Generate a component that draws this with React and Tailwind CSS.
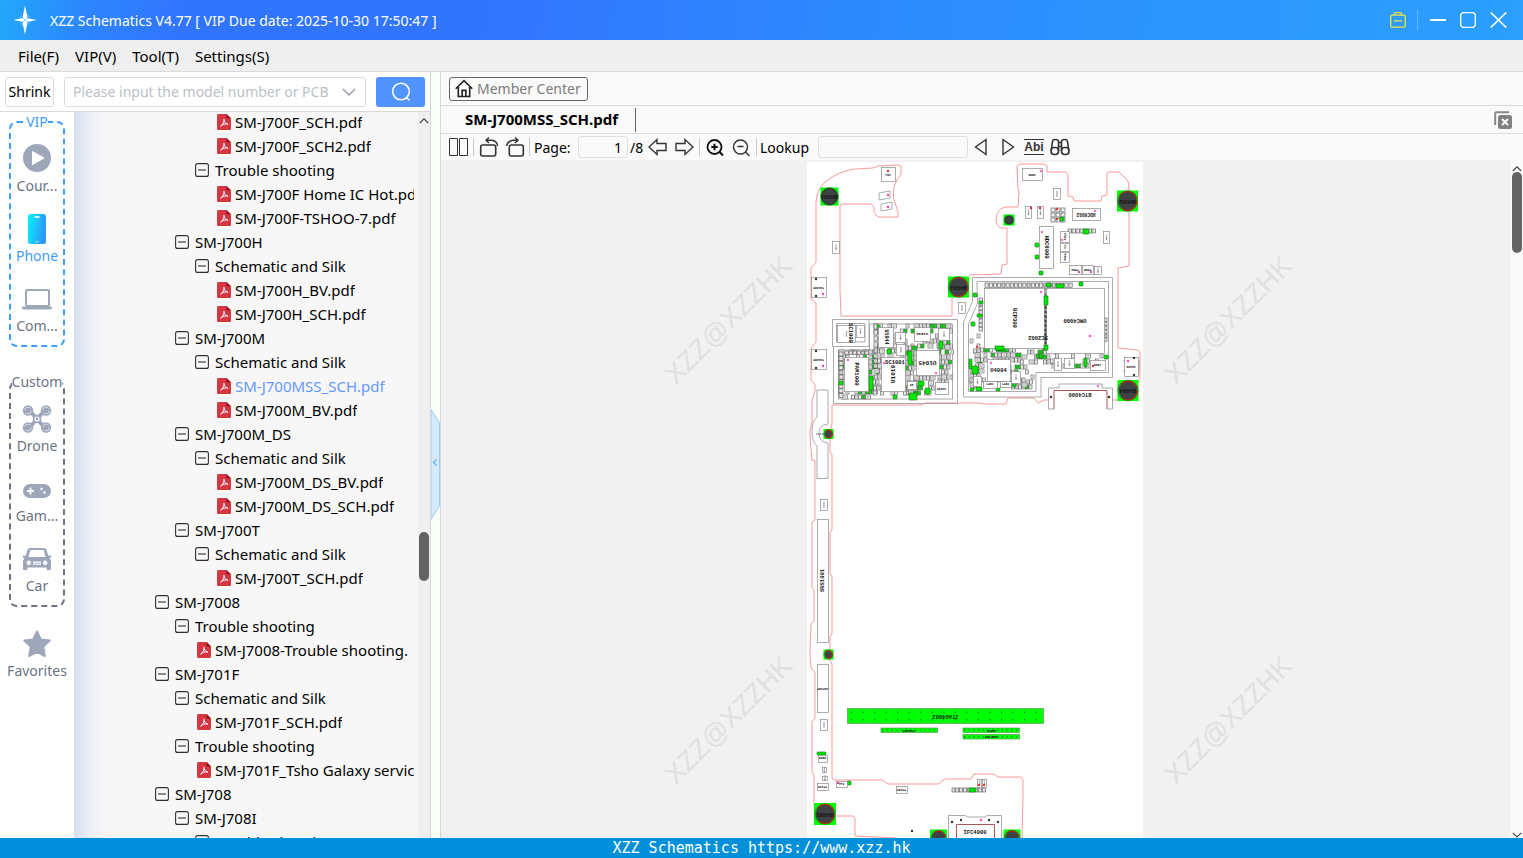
import React from "react";

const tree = [
  { level: 2, kind: "pdf", name: "SM-J700F_SCH.pdf" },
  { level: 2, kind: "pdf", name: "SM-J700F_SCH2.pdf" },
  { level: 2, kind: "dir", name: "Trouble shooting" },
  { level: 2, kind: "pdf", name: "SM-J700F Home IC Hot.pdf" },
  { level: 2, kind: "pdf", name: "SM-J700F-TSHOO-7.pdf" },
  { level: 1, kind: "dir", name: "SM-J700H" },
  { level: 2, kind: "dir", name: "Schematic and Silk" },
  { level: 2, kind: "pdf", name: "SM-J700H_BV.pdf" },
  { level: 2, kind: "pdf", name: "SM-J700H_SCH.pdf" },
  { level: 1, kind: "dir", name: "SM-J700M" },
  { level: 2, kind: "dir", name: "Schematic and Silk" },
  { level: 2, kind: "pdf", name: "SM-J700MSS_SCH.pdf", active: true },
  { level: 2, kind: "pdf", name: "SM-J700M_BV.pdf" },
  { level: 1, kind: "dir", name: "SM-J700M_DS" },
  { level: 2, kind: "dir", name: "Schematic and Silk" },
  { level: 2, kind: "pdf", name: "SM-J700M_DS_BV.pdf" },
  { level: 2, kind: "pdf", name: "SM-J700M_DS_SCH.pdf" },
  { level: 1, kind: "dir", name: "SM-J700T" },
  { level: 2, kind: "dir", name: "Schematic and Silk" },
  { level: 2, kind: "pdf", name: "SM-J700T_SCH.pdf" },
  { level: 0, kind: "dir", name: "SM-J7008" },
  { level: 1, kind: "dir", name: "Trouble shooting" },
  { level: 1, kind: "pdf", name: "SM-J7008-Trouble shooting." },
  { level: 0, kind: "dir", name: "SM-J701F" },
  { level: 1, kind: "dir", name: "Schematic and Silk" },
  { level: 1, kind: "pdf", name: "SM-J701F_SCH.pdf" },
  { level: 1, kind: "dir", name: "Trouble shooting" },
  { level: 1, kind: "pdf", name: "SM-J701F_Tsho Galaxy servic" },
  { level: 0, kind: "dir", name: "SM-J708" },
  { level: 1, kind: "dir", name: "SM-J708I" },
  { level: 2, kind: "dir", name: "Trouble shooting" },
];

const dirPad = ["pl-[81px]", "pl-[101px]", "pl-[121px]"];
const pdfPad = ["pl-[103px]", "pl-[123px]", "pl-[143px]"];

function MinusBox() {
  return (
    <svg width="14" height="14" viewBox="0 0 14 14" fill="none" stroke="#333" strokeWidth="1.1" className="shrink-0">
      <rect x="0.6" y="0.6" width="12.8" height="12.8" rx="2" />
      <path d="M3 7h8" />
    </svg>
  );
}

function PdfIcon() {
  return (
    <svg width="14" height="16" viewBox="0 0 14 16" className="shrink-0">
      <path d="M1.5 0H9.5L14 4.5V14.5A1.5 1.5 0 0 1 12.5 16H1.5A1.5 1.5 0 0 1 0 14.5V1.5A1.5 1.5 0 0 1 1.5 0Z" fill="#d5363f" />
      <path d="M9.5 0L14 4.5H10.5A1 1 0 0 1 9.5 3.5Z" fill="#8f1019" />
      <path d="M7 5.3C6.3 5.6 7.6 8 8.6 9.2C9.6 10.3 11 10.6 10.8 10C10.4 9.3 6.5 10 4.3 11.4C2.9 12.4 3.9 12.6 4.9 11.3C6.2 9.5 7.7 6.2 7 5.3Z" fill="none" stroke="#fff" strokeWidth="1" />
    </svg>
  );
}

function CourseIcon() {
  return (
    <svg width="32" height="32" viewBox="0 0 32 32">
      <circle cx="16" cy="16" r="14" fill="#9ea7ba" />
      <path d="M11.5 9.5L23 16L11.5 22.5Z" fill="#fff" stroke="#fff" strokeWidth="1" strokeLinejoin="round" />
    </svg>
  );
}

function PhoneIcon() {
  return (
    <svg width="32" height="32" viewBox="0 0 32 32">
      <defs>
        <linearGradient id="phoneFill" x1="0" x2="1" y1="0" y2="0.3">
          <stop offset="0" stopColor="#04f4fd" />
          <stop offset="1" stopColor="#2e97fb" />
        </linearGradient>
      </defs>
      <rect x="7" y="2" width="18" height="30" rx="2.5" fill="url(#phoneFill)" />
      <path d="M13.5 5h5" stroke="#fff" strokeWidth="1.6" />
      <path d="M14 29.8h4" stroke="#aef" strokeWidth="0.8" />
    </svg>
  );
}

function LaptopIcon() {
  return (
    <svg width="32" height="32" viewBox="0 0 32 32">
      <rect x="5" y="8" width="23" height="16" rx="1" fill="none" stroke="#9ea7ba" strokeWidth="2" />
      <path d="M1 24.5H31V25.5A2 2 0 0 1 29 27.5H3A2 2 0 0 1 1 25.5Z" fill="#9ea7ba" />
    </svg>
  );
}

function DroneIcon() {
  return (
    <svg width="32" height="32" viewBox="0 0 32 32">
      <path d="M8 8L24 26M24 8L8 26" stroke="#9ea7ba" strokeWidth="4" />
      {[[7, 8.5], [25, 8.5], [7, 25.5], [25, 25.5]].map(([x, y]) => (
        <g key={`${x}-${y}`}>
          <circle cx={x} cy={y} r="5.2" fill="#9ea7ba" />
          <circle cx={x} cy={y} r="3.4" fill="none" stroke="#dfe2ea" strokeWidth="0.9" strokeDasharray="8 3" />
        </g>
      ))}
      <circle cx="16" cy="17" r="4.2" fill="#9ea7ba" />
      <circle cx="16" cy="17" r="2" fill="none" stroke="#fff" strokeWidth="1.2" />
    </svg>
  );
}

function GameIcon() {
  return (
    <svg width="32" height="32" viewBox="0 0 32 32">
      <rect x="2" y="12" width="28" height="14" rx="7" fill="#9ea7ba" />
      <path d="M6 19h7M9.500 15.500v7" stroke="#fff" strokeWidth="1.8" />
      <circle cx="20.500" cy="17" r="1.200" fill="#fff" />
      <circle cx="23.500" cy="20.500" r="1.200" fill="#fff" />
    </svg>
  );
}

function CarIcon() {
  return (
    <svg width="32" height="32" viewBox="0 0 32 32">
      <path fillRule="evenodd" fill="#9ea7ba" d="M9 6H23Q25 6 25.600 8L27.200 13.500L30 13.500V15.500L28.500 16.200Q30 17.500 30 19.500V27Q30 28 29 28H26.500Q25.500 28 25.500 27V25.500H6.500V27Q6.500 28 5.500 28H3Q2 28 2 27V19.500Q2 17.500 3.500 16.200L2 15.500V13.500L4.800 13.500L6.400 8Q7 6 9 6ZM9.300 8L7.500 15H24.500L22.700 8ZM7.800 18.600A2.200 2.200 0 1 0 7.800 23A2.200 2.200 0 1 0 7.800 18.600ZM24.200 18.600A2.200 2.200 0 1 0 24.200 23A2.200 2.200 0 1 0 24.200 18.600ZM12 19.500V22.800H20V19.500Z" />
      <path d="M12.500 21.200h7" stroke="#9ea7ba" strokeWidth="0.800" />
    </svg>
  );
}

function StarIcon() {
  return (
    <svg width="32" height="32" viewBox="0 0 32 32">
      <path d="M16 4.500L19.800 12.400L28.700 13.600L22.200 19.700L23.800 29L16 24.800L8.200 29L9.800 19.700L3.300 13.600L12.200 12.400Z" fill="#9ea7ba" stroke="#9ea7ba" strokeWidth="2" strokeLinejoin="round" />
    </svg>
  );
}

function SideItem({ icon, label, active }) {
  return (
    <button type="button" className={`flex w-full flex-col items-center ${active ? "text-[#409eff]" : "text-[#6b7384]"}`}>
      {icon}
      <span className="h-6 text-[14px] leading-6 whitespace-nowrap">{label}</span>
    </button>
  );
}

function SideBar() {
  return (
    <nav aria-label="Categories" className="flex w-[74px] shrink-0 flex-col items-stretch bg-white">
      <fieldset className="mx-[9px] min-w-0 rounded-lg border-2 border-dashed border-[#409eff] pb-[7px]">
        <legend className="mx-auto h-5 text-[14px] leading-5 text-[#409eff]">VIP</legend>
        <div className="flex flex-col gap-[14px] pt-[10px]">
          <SideItem icon={<CourseIcon />} label="Cour..." />
          <SideItem icon={<PhoneIcon />} label="Phone" active />
          <SideItem icon={<LaptopIcon />} label="Com..." />
        </div>
      </fieldset>
      <fieldset className="mx-[9px] mt-[25px] min-w-0 rounded-lg border-2 border-dashed border-[#6b7384] pb-[7px]">
        <legend className="mx-auto h-5 text-[14px] leading-5 text-[#6b7384]">Custom</legend>
        <div className="flex flex-col gap-[14px] pt-[10px]">
          <SideItem icon={<DroneIcon />} label="Drone" />
          <SideItem icon={<GameIcon />} label="Gam..." />
          <SideItem icon={<CarIcon />} label="Car" />
        </div>
      </fieldset>
      <div className="mt-5">
        <SideItem icon={<StarIcon />} label="Favorites" />
      </div>
    </nav>
  );
}

function TitleBar() {
  return (
    <header className="flex h-10 shrink-0 items-center bg-[linear-gradient(100deg,#22a8fa_0%,#2d84fe_6%,#3175ff_12%,#3175ff_32%,#2c8efd_62%,#2b9ffd_100%)] text-white">
      <svg width="24" height="30" viewBox="0 0 24 30" className="ml-[13px]">
        <circle cx="12" cy="15" r="5.500" fill="none" stroke="#8fd0ff" strokeWidth="1" strokeDasharray="5 3.600" />
        <path d="M12 0.500L14.500 12.500L12 15L9.500 12.500ZM12 29.500L9.500 17.500L12 15L14.500 17.500ZM0 15L9.500 13.200L12 15L9.500 16.800ZM24 15L14.500 13.200L12 15L14.500 16.800Z" fill="#fff" />
        <circle cx="12" cy="15" r="1" fill="#8fd0ff" />
      </svg>
      <h1 className="ml-[13px] text-[14px]">XZZ Schematics V4.77 [ VIP Due date: 2025-10-30 17:50:47 ]</h1>
      <div className="ml-auto flex items-center pr-4">
        <button type="button" aria-label="Toolbox" className="mr-[11px]">
          <svg width="16" height="16" viewBox="0 0 16 16" fill="none" stroke="#f0e43c" strokeWidth="1.300">
            <rect x="0.700" y="3.200" width="14.600" height="12" rx="1.500" />
            <path d="M4.500 3V2A1.300 1.300 0 0 1 5.800 0.700H10.200A1.300 1.300 0 0 1 11.500 2V3M4 8.800H12" />
          </svg>
        </button>
        <span className="h-5 w-px bg-white/30" />
        <button type="button" aria-label="Minimize" className="ml-3">
          <svg width="16" height="16" viewBox="0 0 16 16" stroke="#fff" strokeWidth="2"><path d="M0 8h16" /></svg>
        </button>
        <button type="button" aria-label="Maximize" className="ml-[14px]">
          <svg width="16" height="16" viewBox="0 0 16 16" fill="none" stroke="#fff" strokeWidth="1.300"><rect x="0.700" y="0.700" width="14.600" height="14.600" rx="3" /></svg>
        </button>
        <button type="button" aria-label="Close" className="ml-[14px]">
          <svg width="17" height="16" viewBox="0 0 17 16" stroke="#fff" strokeWidth="1.600"><path d="M0.700 0.500L16.300 15.500M16.300 0.500L0.700 15.500" /></svg>
        </button>
      </div>
    </header>
  );
}

function Divider() {
  return <span className="h-[18px] w-px shrink-0 bg-[#c9c9c9]" />;
}

function ToolButton({ label, className = "", children }) {
  return (
    <button type="button" aria-label={label} className={`shrink-0 ${className}`}>
      <svg width="20" height="22" viewBox="0 0 20 22" fill="none" stroke="#333" strokeWidth="1.400">
        {children}
      </svg>
    </button>
  );
}

function PdfToolbar() {
  return (
    <div className="flex h-[26px] shrink-0 items-center bg-[#fafafa] pl-2 text-[14px]">
      <ToolButton label="Two pages">
        <path d="M0.500 2.500h8v17h-8zM10.500 2.500h8v17h-8z" strokeWidth="1" />
      </ToolButton>
      <span className="w-1" />
      <Divider />
      <ToolButton label="Rotate left" className="ml-[5px]">
        <rect x="1.700" y="9" width="15" height="11" rx="2" strokeWidth="1.600" />
        <path d="M7 4.300H12.500Q18 4.800 18.600 10M10 1.500L7 4.300L10 7" />
      </ToolButton>
      <ToolButton label="Rotate right" className="ml-[6px]">
        <rect x="4.300" y="9" width="14" height="11" rx="2" strokeWidth="1.600" />
        <path d="M13 4.300H8Q2.500 4.800 1.700 10M10 1.500L13 4.300L10 7" />
      </ToolButton>
      <span className="w-1" />
      <Divider />
      <label htmlFor="page-number" className="ml-1 w-11 shrink-0">Page:</label>
      <input id="page-number" defaultValue="1" className="h-[22px] w-[50px] rounded-[3px] border border-[#e0e0e0] bg-[#fafafa] pr-[5px] text-right" />
      <span className="w-5 shrink-0 pl-[2px]">/8</span>
      <ToolButton label="Previous page">
        <path d="M1 11L9 3.500V7.500H18V14.500H9V18.500Z" />
      </ToolButton>
      <ToolButton label="Next page" className="ml-[6px]">
        <path d="M19 11L11 3.500V7.500H2V14.500H11V18.500Z" />
      </ToolButton>
      <span className="w-[5px]" />
      <Divider />
      <ToolButton label="Zoom in" className="ml-[5px]">
        <circle cx="9.500" cy="11" r="7" strokeWidth="1.800" stroke="#111" />
        <path d="M6.300 11h6.400M9.500 7.800v6.400M14.600 16L18 19.500" strokeWidth="2" stroke="#111" />
      </ToolButton>
      <ToolButton label="Zoom out" className="ml-[6px]">
        <circle cx="9.500" cy="11" r="7" />
        <path d="M6.500 10.500h6M14.600 16L18.500 20" />
      </ToolButton>
      <span className="w-[5px]" />
      <Divider />
      <label htmlFor="lookup" className="ml-[3px] w-[58px] shrink-0">Lookup</label>
      <input id="lookup" className="h-[22px] w-[150px] rounded-[3px] border border-[#e0e0e0] bg-[#fafafa] px-1" />
      <ToolButton label="Find previous" className="ml-1">
        <path d="M14 3.500V18.500L3.500 11Z" />
      </ToolButton>
      <ToolButton label="Find next" className="ml-[6px]">
        <path d="M5 3.500V18.500L15.500 11Z" />
      </ToolButton>
      <button type="button" className="ml-[6px] w-5 shrink-0 border-y border-[#333] text-center font-['Liberation_Sans',sans-serif] text-[12px] leading-[14px] font-bold text-[#333]">Abi</button>
      <ToolButton label="Find in document" className="ml-[6px]">
        <path d="M1.200 15L2.500 5.500Q2.800 3.500 5 3.500Q8.500 3.500 8.500 5.500V15M11.500 15V5.500Q11.500 3.500 15 3.500Q17.200 3.500 17.500 5.500L18.800 15M8.500 6.500h3M8.500 10.500h3" strokeWidth="1.600" />
        <rect x="1" y="11.500" width="7.500" height="7" rx="3.200" strokeWidth="1.600" />
        <rect x="11.500" y="11.500" width="7.500" height="7" rx="3.200" strokeWidth="1.600" />
      </ToolButton>
    </div>
  );
}

function lcg(seed) {
  let s = seed;
  return () => {
    s = (s * 1103515245 + 12345) % 2147483648;
    return s / 2147483648;
  };
}

// [x, y, width, height, density, seed]
const clusters = [
  [839, 350, 30, 49, 0.7, 3],
  [869, 350, 13, 44, 0.9, 5],
  [874, 324, 10, 50, 0.85, 7],
  [888, 324, 26, 34, 0.7, 9],
  [905, 346, 12, 52, 0.85, 11],
  [914, 324, 39, 26, 0.7, 13],
  [938, 335, 14, 60, 0.75, 15],
  [914, 376, 22, 22, 0.75, 17],
  [870, 386, 44, 12, 0.65, 19],
  [970, 334, 13, 56, 0.6, 21],
  [975, 348, 46, 14, 0.85, 23],
  [1008, 360, 26, 30, 0.65, 25],
  [1022, 350, 36, 18, 0.7, 27],
  [1036, 354, 68, 16, 0.5, 29],
  [970, 378, 58, 12, 0.55, 31],
];

const cells = clusters.flatMap(([x, y, w, h, density, seed]) => {
  const rnd = lcg(seed * 7919);
  const out = [];
  for (let cy = y; cy + 4 <= y + h; cy += 5) {
    let cx = x;
    while (cx + 3 <= x + w) {
      const cw = rnd() > 0.7 ? 5 : 3;
      if (rnd() < density) out.push({ x: cx, y: cy, w: cw, h: 4, green: rnd() < 0.17 });
      cx += cw + 0.5;
    }
  }
  return out;
});

// [x, y, count, stepX, stepY, w, h]
const strips = [
  [985, 283, 21, 4.200, 0, 3.200, 4.500],
  [874, 324, 5, 0, 6, 3.500, 5],
  [839, 352, 10, 0, 4.600, 4, 4],
  [845, 351, 6, 4, 0, 3.500, 3.500],
  [1045, 285, 14, 0, 4.700, 2.600, 4],
  [979, 298, 8, 0, 4.200, 3.500, 3.600],
  [1068, 229, 7, 4, 0, 3.400, 4],
  [1104, 318, 6, 0, 4, 3, 3.600],
  [952, 788, 9, 3.800, 0, 3, 4],
];

// [x, y, w, h, label, rotation, size]
const chips = [
  [881, 167, 14, 14, "CN1", 180, 3],
  [832, 241, 7, 12, "", 0, 3],
  [958, 302, 7, 11, "", 0, 3],
  [844, 357, 24, 34, "PAM1000", 90, 5.500],
  [881, 357, 24, 34, "U1019", -90, 6],
  [878, 327, 15, 20, "U1044", 90, 5],
  [916, 350, 23, 25, "U1045", 180, 6],
  [914, 327, 16, 14, "U1041", 180, 4],
  [837, 325, 18, 17, "", 0, 3],
  [856, 325, 8, 12, "", 0, 3],
  [895, 332, 10, 10, "", 0, 3],
  [896, 344, 9, 11, "", 0, 3],
  [938, 328, 11, 12, "", 0, 3],
  [907, 381, 9, 8, "U8", 0, 3],
  [935, 382, 13, 12, "U1006", 180, 3],
  [984, 288, 60, 60, "UCP300", 90, 5.500],
  [1046, 288, 58, 65, "UMC4000", 180, 5.500],
  [987, 359, 23, 22, "U4004", 0, 5.500],
  [983, 381, 14, 7, "L401", 0, 3],
  [1000, 381, 11, 6, "L402", 0, 3],
  [1011, 371, 9, 12, "", 0, 3],
  [973, 376, 8, 10, "", 0, 3],
  [1054, 358, 7, 12, "", 0, 3],
  [1064, 358, 10, 10, "", 0, 3],
  [1090, 360, 15, 10, "D601", 0, 3],
  [1022, 168, 20, 12, "U600", 180, 3],
  [1053, 188, 7, 11, "", 0, 3],
  [1025, 206, 6, 12, "", 0, 3],
  [1037, 206, 6, 12, "", 0, 3],
  [1072, 208, 28, 12, "HDC6002", 180, 4.500],
  [1039, 226, 14, 42, "HDC6000", 90, 5.500],
  [1060, 231, 9, 11, "F601", 90, 3],
  [1060, 243, 9, 8, "F2", 90, 3],
  [1060, 252, 9, 10, "F603", 90, 3],
  [1069, 265, 12, 9, "F604", 180, 3],
  [1082, 265, 11, 9, "F605", 180, 3],
  [1094, 266, 7, 8, "", 0, 3],
  [1103, 231, 6, 12, "", 0, 3],
  [1124, 357, 14, 19, "SW402", 180, 3],
  [811, 277, 15, 20, "TAC300", 180, 3],
  [811, 349, 15, 20, "TAC200", 180, 3],
  [820, 499, 7, 11, "", 0, 3],
  [817, 519, 11, 123, "SUS1001", -90, 5.500],
  [817, 664, 11, 48, "ANT100", 180, 3],
  [820, 719, 7, 11, "", 0, 3],
  [817, 783, 11, 7, "TP100", 180, 3],
  [836, 781, 11, 6, "TP2", 0, 3],
  [896, 786, 11, 7, "TP300", 180, 3],
  [818, 755, 9, 7, "D900", 0, 3],
  [822, 767, 4, 5, "", 0, 3],
  [822, 776, 5, 4, "", 0, 3],
  [977, 779, 4, 8, "", 0, 3],
  [982, 779, 4, 8, "", 0, 3],
];

// [centre x, centre y, square size, radius, label, red arc]
const holes = [
  [829.5, 196.500, 18, 8, "BH4001", false],
  [1127.500, 201, 21, 9.500, "BH4002", true],
  [958.500, 287, 21, 9.500, "BH4003", true],
  [1128, 390.500, 21, 9.500, "BH4004", true],
  [825, 814, 22, 9.500, "BH4005", true],
  [1009, 220, 11, 4, "", false],
  [828.500, 434, 10, 3.800, "", true],
  [828.500, 654.500, 10, 3.800, "", true],
  [938.500, 838, 17, 7, "", true],
  [1012, 838, 17, 7, "", true],
];

// [x, y, w, h]
const greens = [
  [973, 293, 4, 4], [971, 322, 4, 4], [977, 314, 5, 3], [979, 301, 4, 3], [969, 359, 3, 10], [972, 366, 6, 8],
  [1035, 243, 4, 4], [1035, 255, 4, 4], [1039, 271, 4, 4], [1083, 229, 6, 5], [1079, 282, 4, 4], [1043, 295, 4, 10],
  [1043, 345, 4, 5], [1104, 355, 4, 4], [995, 346, 9, 4], [1060, 217, 4, 4], [1046, 283, 5, 4], [1056, 284, 8, 4],
  [908, 351, 4, 14], [909, 393, 8, 7], [925, 388, 5, 6], [887, 349, 4, 5], [918, 381, 6, 5], [939, 341, 4, 8],
  [869, 376, 4, 14], [893, 395, 4, 4], [877, 325, 3, 3], [839, 381, 4, 4], [838, 336, 5, 3], [848, 338, 4, 3],
  [817, 752, 9, 3], [847, 781, 4, 4], [969, 788, 7, 4], [1084, 358, 3, 9], [970, 388, 4, 3], [976, 387, 6, 4], [996, 388, 4, 3],
];

const pads = [
  [888, 171, "#e33"], [888, 195, "#e4a"], [888, 207, "#e4a"], [1041, 292, "#f6c"], [1090, 336, "#f4b"], [1041, 171, "#f6c"],
  [1042, 232, "#f6c"], [1031, 208, "#c26"], [1040, 208, "#c26"], [1057, 209, "#e33"], [1057, 219, "#e33"], [1095, 211, "#f6c"],
  [991, 363, "#f6c"], [848, 360, "#f6c"], [884, 363, "#f6c"], [936, 373, "#f6c"], [823, 294, "#f4b"], [823, 366, "#f4b"],
  [816, 279, "#333"], [816, 296, "#333"], [816, 351, "#333"], [816, 368, "#333"], [1134, 358, "#333"], [1134, 375, "#333"],
  [1093, 366, "#e33"], [1098, 386, "#f6c"], [1051, 397, "#333"], [1109, 397, "#333"], [1128, 361, "#f4b"], [979, 785, "#d33"],
  [984, 785, "#d33"], [952, 822, "#333"], [998, 822, "#333"], [961, 820, "#333"], [989, 820, "#333"], [981, 820, "#f4b"], [912, 831, "#333"],
  [977, 347, "#e33"], [838, 783, "#e4a"], [1062, 240, "#f6c"], [1079, 272, "#e4a"], [1091, 272, "#e4a"],
];

function BoardLabel({ x, y, size, rotate, children }) {
  return (
    <text x={x} y={y} fontSize={size} fill="#111" textAnchor="middle" dominantBaseline="central" transform={`rotate(${rotate} ${x} ${y})`} className="font-['Liberation_Mono',monospace] font-bold">
      {children}
    </text>
  );
}

function Connector({ x, y, w, h, n, rows, label, size }) {
  const dots = [];
  for (let r = 0; r < rows; r++) {
    for (let i = 0; i < n; i++) {
      dots.push([x + ((i + 0.35) * w) / n, y + ((r + 0.5) * h) / rows]);
    }
  }
  return (
    <g>
      <rect x={x} y={y} width={w} height={h} fill="#00ff00" stroke="#4a8a4a" strokeWidth="0.600" />
      {dots.map(([dx, dy], i) => <rect key={i} x={dx - 0.6} y={dy - 0.6} width="1.200" height="1.200" fill="#065" />)}
      <BoardLabel x={x + w / 2} y={y + h / 2} size={size} rotate={180}>{label}</BoardLabel>
    </g>
  );
}

function Board() {
  return (
    <svg width="336" height="676" viewBox="807 162 336 676" className="block shrink-0 bg-white" role="img" aria-label="Board view">
      <g fill="none" stroke="#f98c8c" strokeWidth="0.900" strokeLinejoin="round">
        <path d="M969 275L1001 274L1002 265L1007 264V228H1001Q996 226 996 219Q997 208 1006 207H1018L1019 192L1018 189L1017 166L1020 164H1044L1047 166V172H1066L1068 175V196L1073 197L1074 201H1101L1102 196L1107 195V173L1109 172H1119L1128 181Q1130 190 1129 200V266L1118 268V348L1138 350L1140 352V378L1138 381" />
        <path d="M952 298V316H841L840 290V205L842 204H871L874 207V212L878 217H898Q899 212 896 206Q890 192 897 180L901 174V166L898 165L878 166L873 168L855 169Q838 171 824 183Q817 190 816 202V262L811 268V299L816 303V342L811 348V380L815 384V391L812 400V422L810 430Q810 440 812 460L815 461V520L812 522V588L814 590V621L811 624L810 655L811 668L815 672V718L812 722V772L814 775V805" />
        <path d="M1120 400H1112M1048 400H1044L1038 403L1034 398H1008L1006 404H985L979 403H925L922 405H832V424L830 433V452L832 455V529L830 533V573L832 577V633L830 637V660L832 664V778L834 780H882L888 784H938L945 779H971L974 774H994L998 777H1021L1023 780V795L1022 838" />
        <path d="M837 816H853L855 818V836L897 838" />
      </g>
      <g fill="none" stroke="#959595" strokeWidth="0.800">
        <path d="M832.500 319.500H869V346.500H832.500ZM836.500 323.500H865V342H836.500Z" />
        <path d="M869 319.500H957.500V403.500H833.500V346.500M838.500 350H869.500V324H952.500V399H838.500Z" />
        <path d="M972.500 277.500H1112.500V377.500H1041V397H963.500V322L972.500 301.500ZM977 281.500H1108.500V372.500H1036V391.500H968.500V324L977.500 303.500Z" />
        <path d="M817 390V417Q812 421 812 432Q812 442 817 446V478.500H828V443Q819 442 819 433Q819 425 828 424V390Z" />
        <path d="M1054 409H1048.500V388H1059V384H1102V388H1112.500V409H1107" />
        <path d="M948.500 838V815.500H965L968 817H985L987 815.500H1001.500V838" />
        <path d="M1123 361H1139V371H1123M879 193L890 191V198L879 200ZM881 204L892 202V209L881 211Z" />
      </g>
      <path d="M1054 409V390.500H1107V409M956.500 838V824.500H994.500V838" fill="none" stroke="#a04444" strokeWidth="0.900" />
      <g stroke="#555" strokeWidth="0.600">
        {cells.map((c, i) => (
          <g key={i}>
            <rect x={c.x} y={c.y} width={c.w} height={c.h} fill={c.green ? "#00e800" : "#fff"} />
            <path d={`M${c.x + 1} ${c.y + 2}h${c.w - 2}`} />
          </g>
        ))}
        {strips.flatMap(([x, y, n, sx, sy, w, h], s) =>
          Array.from({ length: n }, (_, i) => (
            <rect key={`${s}-${i}`} x={x + i * sx} y={y + i * sy} width={w} height={h} fill={i % 6 === 4 ? "#c8d0c8" : "#e6e6e6"} />
          )),
        )}
        {[1051, 1056, 1061].flatMap((x) => [208, 213, 218].map((y) => <rect key={`${x}-${y}`} x={x} y={y} width="4" height="4" fill="#eee" />))}
      </g>
      {greens.map(([x, y, w, h], i) => (
        <rect key={i} x={x} y={y} width={w} height={h} rx="0.800" fill="#00e800" stroke="#1c6b1c" strokeWidth="0.600" />
      ))}
      {chips.map(([x, y, w, h, label, rot, size], i) => (
        <g key={i}>
          <rect x={x + 0.5} y={y + 0.5} width={w} height={h} fill="#fff" stroke="#8a8a8a" strokeWidth="0.700" />
          {label ? (
            <BoardLabel x={x + w / 2} y={y + h / 2} size={size} rotate={rot}>{label}</BoardLabel>
          ) : (
            <path d={`M${x + w / 2 + 0.5} ${y + h / 2 - 2.5}v6`} stroke="#888" strokeWidth="1.400" strokeDasharray="0.800 0.400" />
          )}
        </g>
      ))}
      <g fill="#00e800" stroke="#1c6b1c" strokeWidth="0.600">
        <rect x="1044" y="296" width="4" height="9" />
        <rect x="1044" y="345" width="4" height="5" />
        <rect x="995" y="346" width="9" height="4" />
      </g>
      <path d="M1045.500 306V344" stroke="#444" strokeWidth="2" strokeDasharray="3 1.500" />
      <BoardLabel x={850} y={333} size={5.5} rotate={90}>SC1000</BoardLabel>
      <BoardLabel x={895} y={362} size={5.5} rotate={0}>SC1001</BoardLabel>
      <BoardLabel x={1038} y={337} size={5.5} rotate={180}>SC2002</BoardLabel>
      <BoardLabel x={1080} y={394} size={5.5} rotate={180}>BTC4000</BoardLabel>
      <BoardLabel x={975} y={832} size={5.5} rotate={0}>IFC4000</BoardLabel>
      <Connector x={847.5} y={708.5} w={196} h={15} n={17} rows={2} label="JTAG4002" size={5.5} />
      <Connector x={881} y={728} w={56.5} h={4.5} n={12} rows={1} label="JTAG400" size={3} />
      <Connector x={963} y={728} w={56.5} h={4.5} n={12} rows={1} label="UART1" size={3} />
      <Connector x={963} y={734.5} w={56.5} h={4.5} n={12} rows={1} label="UART100" size={3} />
      {pads.map(([x, y, c], i) => <circle key={i} cx={x} cy={y} r="1.200" fill={c} />)}
      {holes.map(([x, y, s, r, label, arc], i) => (
        <g key={i}>
          <rect x={x - s / 2} y={y - s / 2} width={s} height={s} fill="#00ff00" />
          <circle cx={x} cy={y} r={r + 0.8} fill="none" stroke="#157515" strokeWidth="0.700" />
          <circle cx={x} cy={y} r={r} fill="#3f4244" stroke={arc ? "#e01010" : "#333"} strokeWidth="1" strokeDasharray={arc ? `${r * 2.2} ${r * 1.6}` : undefined} />
          {label && <BoardLabel x={x} y={y} size={4.5} rotate={180}>{label}</BoardLabel>}
        </g>
      ))}
      <path d="M816 434h9" stroke="#555" strokeWidth="1.200" strokeDasharray="1.500 0.500" />
    </svg>
  );
}

function Watermark({ className }) {
  return (
    <span className={`pointer-events-none absolute flex h-[130px] w-[130px] items-center justify-center ${className}`}>
      <span className="-rotate-45 font-['Liberation_Sans',sans-serif] text-[27px] whitespace-nowrap text-[#e0e0e0]">XZZ@XZZHK</span>
    </span>
  );
}

function ScrollArrow({ flip }) {
  return (
    <svg width="10" height="6" viewBox="0 0 10 6" fill="none" stroke="#444" strokeWidth="1.100" className="mx-auto shrink-0">
      <path d={flip ? "M0.800 0.800L5 5L9.200 0.800" : "M0.800 5L5 0.800L9.200 5"} />
    </svg>
  );
}

export default function App() {
  return (
    <div className="flex h-screen flex-col overflow-hidden bg-[#fafafa] font-['Noto_Sans','Noto_Sans_CJK_SC',sans-serif] text-[14px] text-black">
      <TitleBar />
      <nav aria-label="Menu" className="flex h-8 shrink-0 items-center gap-4 border-b border-[#dadada] bg-[#efefef] pt-px pl-[18px] text-[15px]">
        <button type="button">File(F)</button>
        <button type="button">VIP(V)</button>
        <button type="button">Tool(T)</button>
        <button type="button">Settings(S)</button>
      </nav>
      <main className="flex min-h-0 flex-1">
        <section className="flex w-[431px] shrink-0 flex-col border-r border-[#d8d8d8]">
          <div className="flex h-10 shrink-0 items-center gap-[10px] border-b border-[#d8d8d8] bg-white pl-[5px]">
            <button type="button" className="h-[30px] w-[49px] rounded-[3px] border border-[#dcdcdc]">Shrink</button>
            <div className="flex h-[30px] w-[302px] items-center rounded-[3px] border border-[#dcdcdc] pr-[9px] pl-2">
              <input aria-label="Model number or PCB" placeholder="Please input the model number or PCB" className="min-w-0 flex-1 bg-transparent outline-none placeholder:text-[#bcbfc6]" />
              <svg width="14" height="8" viewBox="0 0 14 8" fill="none" stroke="#9a9da3" strokeWidth="1.500" className="ml-2 shrink-0"><path d="M1 1L7 7L13 1" /></svg>
            </div>
            <button type="button" aria-label="Search" className="flex h-[30px] w-[49px] items-center justify-center rounded-[3px] bg-[#5294ff]">
              <svg width="20" height="20" viewBox="0 0 20 20" fill="none" stroke="#fff" strokeWidth="1.500"><circle cx="10" cy="9.500" r="8.300" /><path d="M15.500 15.500L18.500 18.500" /></svg>
            </button>
          </div>
          <div className="flex min-h-0 flex-1">
            <SideBar />
            <div className="min-w-0 flex-1 overflow-hidden bg-[linear-gradient(90deg,#d6dff0_0px,#e4e9f3_10px,#f0f2f6_20px,#f7f7f7_32px)]">
              <ul className="-mt-[2px] mr-1 overflow-hidden text-[15px]">
                {tree.map((n, i) => (
                  <li key={i}>
                    <a href={`#node-${i}`} className={`flex h-6 items-center whitespace-nowrap ${n.kind === "dir" ? `gap-[6px] ${dirPad[n.level]}` : `gap-1 ${pdfPad[n.level]}`} ${n.active ? "text-[#6699ff]" : ""}`}>
                      {n.kind === "dir" ? <MinusBox /> : <PdfIcon />}
                      <span className="min-w-0 overflow-hidden">{n.name}</span>
                    </a>
                  </li>
                ))}
              </ul>
            </div>
            <div className="flex w-3 shrink-0 flex-col bg-[#efefef] pt-[6px]">
              <ScrollArrow />
              <span className="mt-[408px] ml-px h-[49px] w-[10px] rounded-full bg-[#646464]" />
            </div>
          </div>
        </section>
        <div className="flex w-[10px] shrink-0 flex-col border-r border-[#d8d8d8] bg-[#fafffa] pt-[337px]">
          <button type="button" aria-label="Collapse panel">
            <svg width="9" height="111" viewBox="0 0 9 111" className="block">
              <path d="M0 0.500L8.500 14V97L0 110.500Z" fill="#d6eafd" stroke="#9ccdf7" strokeWidth="1" />
              <path d="M5.500 50.500L2.500 53.500L5.500 56.500" fill="none" stroke="#5ab4f5" strokeWidth="1.200" />
            </svg>
          </button>
        </div>
        <section className="flex min-w-0 flex-1 flex-col">
          <div className="flex h-[34px] shrink-0 items-center border-b border-[#dadada] pl-2">
            <button type="button" className="flex h-6 w-[139px] items-center gap-1 rounded-[3px] border border-[#666] pl-[5px] text-[#7b7b7b]">
              <svg width="18" height="19" viewBox="0 0 19 19" fill="none" stroke="#222" strokeWidth="1.700">
                <path d="M0.800 9.800L9.500 1.200L18.200 9.800M3.500 8V18H15.500V8M7.500 18V11.500H11.500V18" />
              </svg>
              <span className="whitespace-nowrap">Member Center</span>
            </button>
          </div>
          <div className="flex h-7 shrink-0 items-center border-b border-[#dadada] pr-[11px]">
            <button type="button" className="h-6 w-[195px] border-r border-[#666] pl-[7px] text-center text-[15px] font-bold">SM-J700MSS_SCH.pdf</button>
            <button type="button" aria-label="Close all tabs" className="ml-auto">
              <svg width="18" height="18" viewBox="0 0 18 18">
                <path d="M1.200 14V2.500Q1.200 1.200 2.500 1.200H15" fill="none" stroke="#888" strokeWidth="2" />
                <rect x="4" y="4" width="14" height="14" rx="2.500" fill="#808080" />
                <path d="M8 8L14 14M14 8L8 14" stroke="#fff" strokeWidth="1.800" />
              </svg>
            </button>
          </div>
          <PdfToolbar />
          <div className="flex min-h-0 flex-1">
            <div className="relative flex min-w-0 flex-1 justify-center overflow-hidden bg-[#f1f1f1] pt-[2px] pr-px">
              <Board />
              <Watermark className="top-[95px] left-[222px]" />
              <Watermark className="top-[95px] left-[722px]" />
              <Watermark className="top-[495px] left-[222px]" />
              <Watermark className="top-[495px] left-[722px]" />
            </div>
            <div className="flex w-[13px] shrink-0 flex-col bg-[#fafafa] pt-[6px]">
              <ScrollArrow />
              <span className="mx-auto h-[81px] w-[10px] rounded-full bg-[#646464]" />
              <span className="flex-1" />
              <ScrollArrow flip />
            </div>
          </div>
        </section>
      </main>
      <footer className="h-5 shrink-0 bg-[#0090d9] text-center font-['DejaVu_Sans_Mono',monospace] text-[15px] leading-5 text-white">XZZ Schematics https://www.xzz.hk</footer>
    </div>
  );
}
